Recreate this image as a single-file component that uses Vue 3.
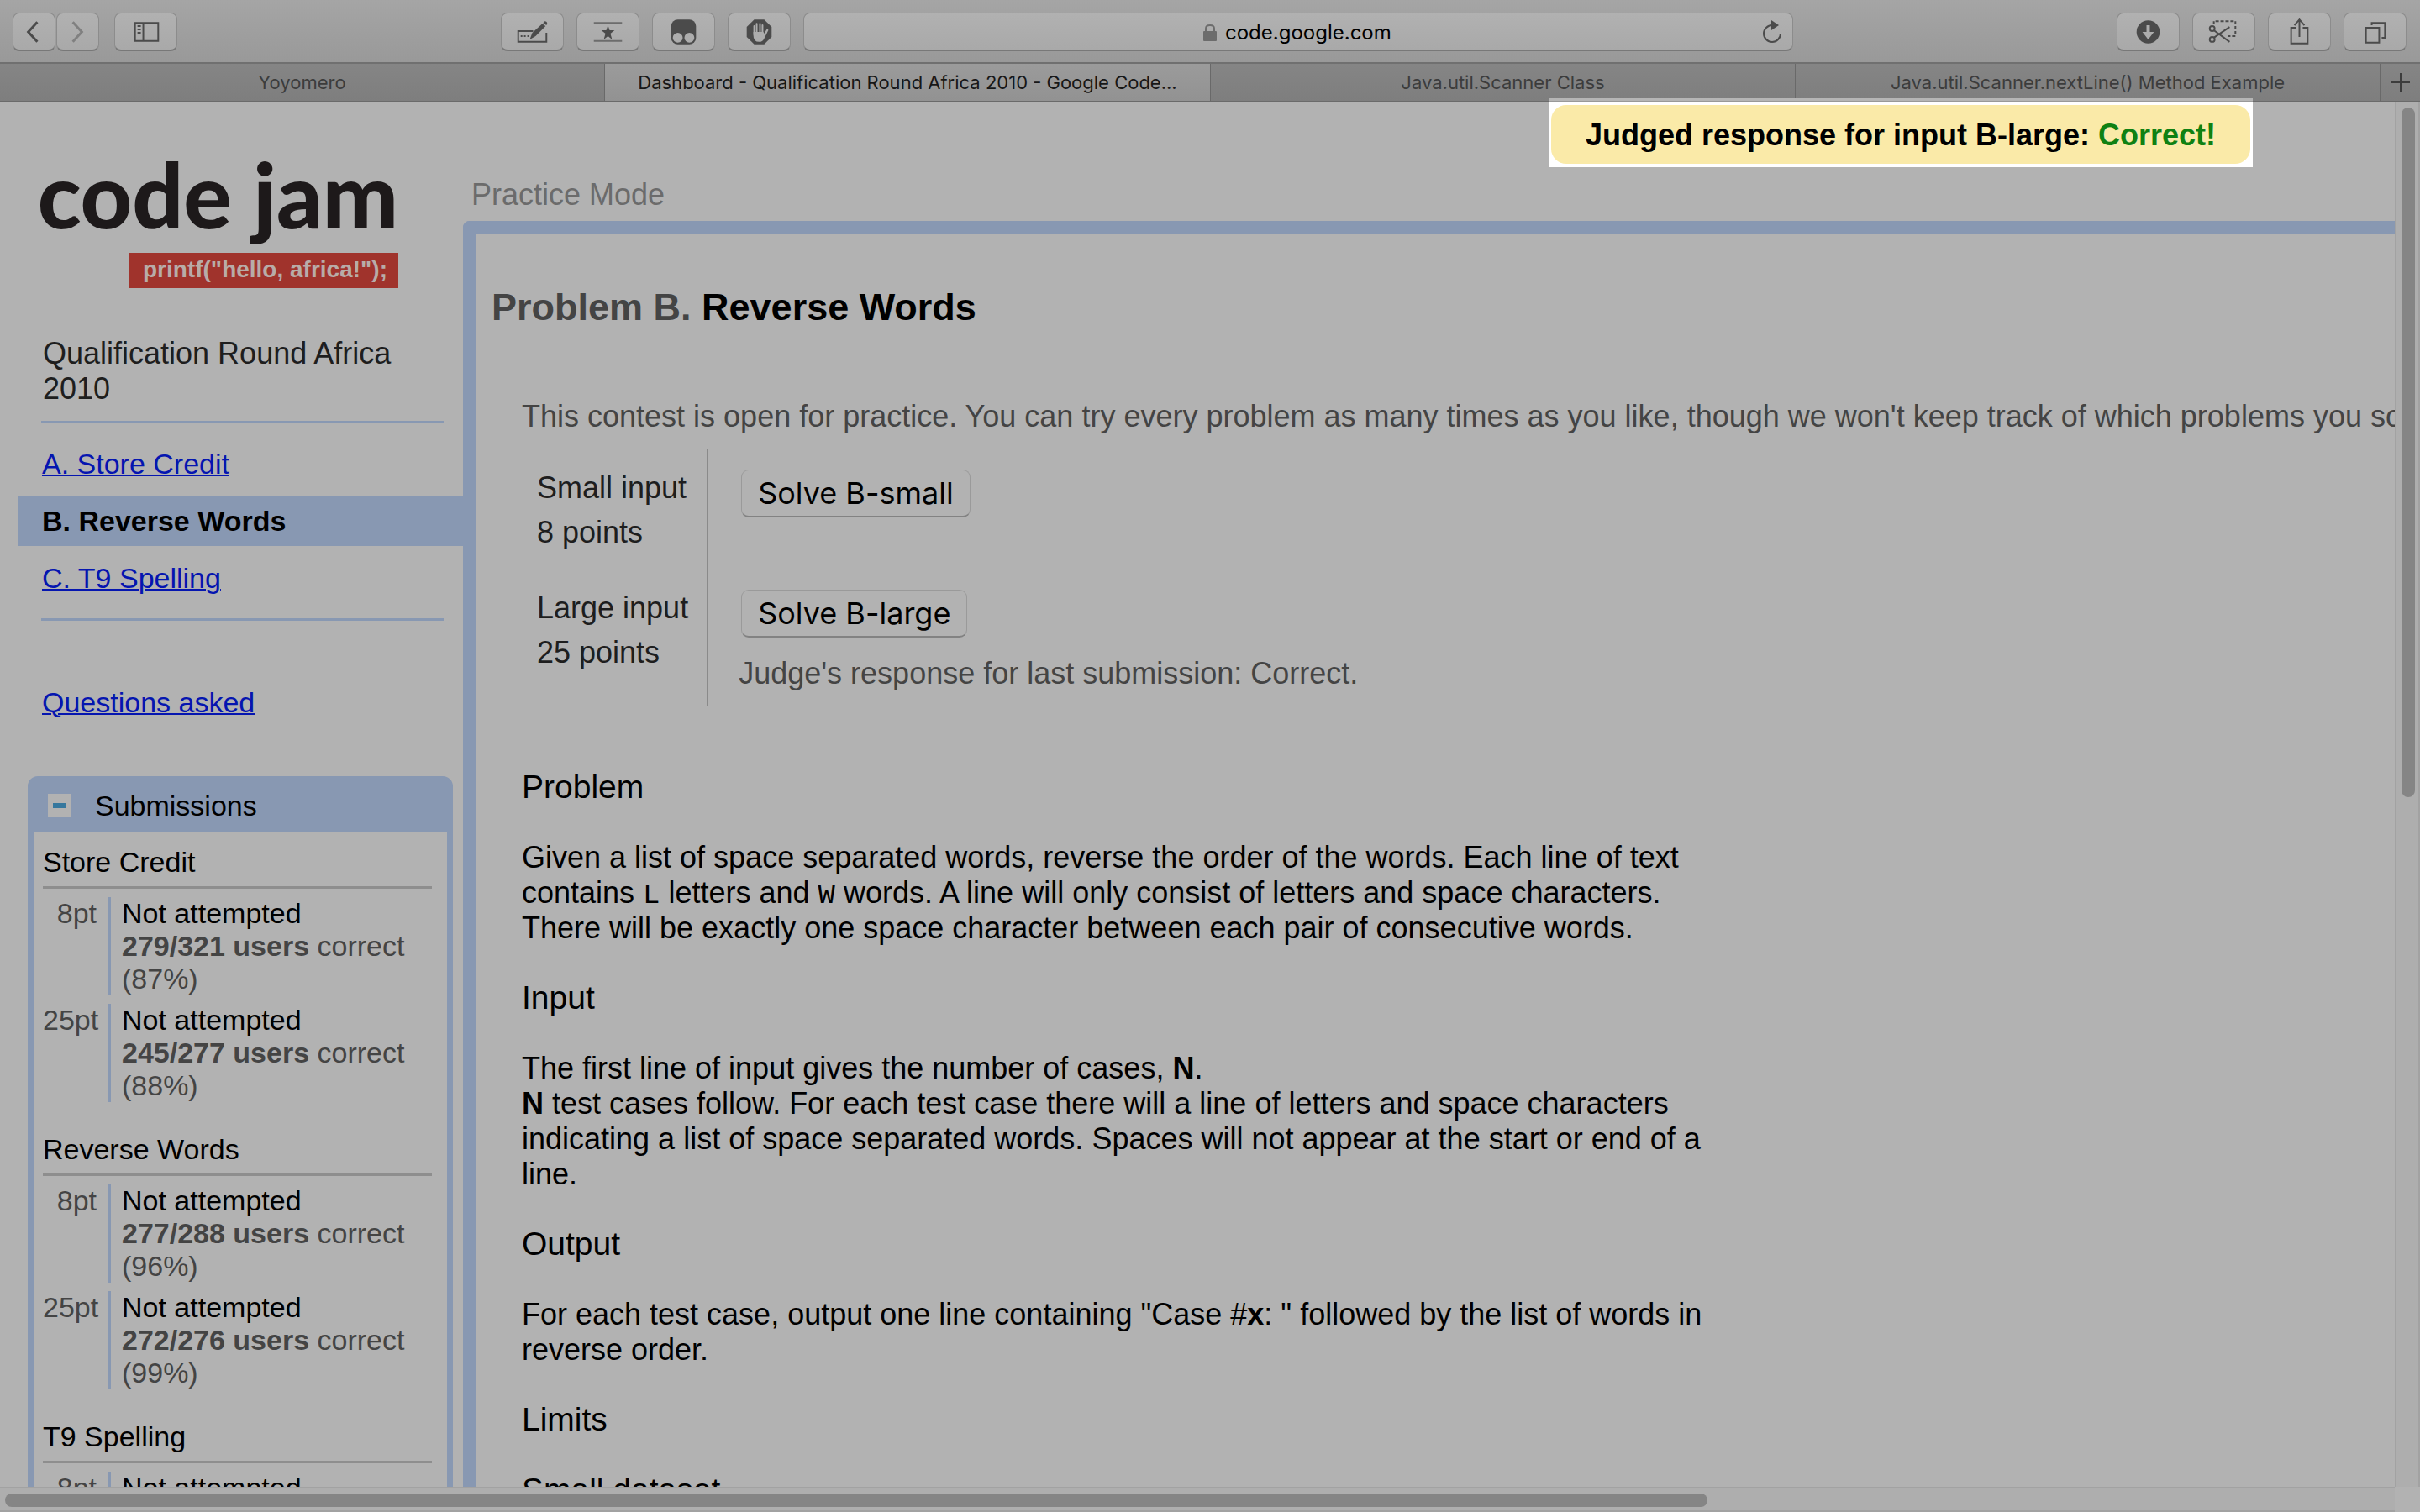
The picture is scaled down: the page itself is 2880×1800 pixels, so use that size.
<script setup>
import { ref } from 'vue'

const address = ref('code.google.com')

const tabs = [
  { title: 'Yoyomero', active: false },
  { title: 'Dashboard - Qualification Round Africa 2010 - Google Code...', active: true },
  { title: 'Java.util.Scanner Class', active: false },
  { title: 'Java.util.Scanner.nextLine() Method Example', active: false },
]

const problems = [
  { label: 'A. Store Credit', current: false },
  { label: 'B. Reverse Words', current: true },
  { label: 'C. T9 Spelling', current: false },
]

const submissions = [
  {
    name: 'Store Credit',
    rows: [
      { points: '8pt', users: '279/321 users', rate: '(87%)' },
      { points: '25pt', users: '245/277 users', rate: '(88%)' },
    ],
  },
  {
    name: 'Reverse Words',
    rows: [
      { points: '8pt', users: '277/288 users', rate: '(96%)' },
      { points: '25pt', users: '272/276 users', rate: '(99%)' },
    ],
  },
  {
    name: 'T9 Spelling',
    rows: [{ points: '8pt', users: '', rate: '' }],
  },
]
</script>

<template>
  <div class="window">
    <header class="toolbar">
      <div class="group nav">
        <div class="pair">
          <button class="tool half" aria-label="Back">
            <svg width="50" height="44" viewBox="0 0 50 44"><path d="M29 10 18 22 29 34" fill="none" stroke="#4b4b4b" stroke-width="3" /></svg>
          </button>
          <button class="tool half" aria-label="Forward">
            <svg width="50" height="44" viewBox="0 0 50 44"><path d="M19 10 30 22 19 34" fill="none" stroke="#808080" stroke-width="3" /></svg>
          </button>
        </div>
        <button class="tool" aria-label="Show sidebar">
          <svg width="74" height="44" viewBox="0 0 74 44">
            <path d="M24 11h28v22H24zM34 11v22" fill="none" stroke="#4b4b4b" stroke-width="2" />
            <path d="M27 14h4v2h-4zM27 18h4v2h-4zM27 22h4v2h-4z" fill="#4b4b4b" />
          </svg>
        </button>
      </div>

      <div class="group centre">
        <button class="tool" aria-label="Autofill">
          <svg width="74" height="44" viewBox="0 0 74 44">
            <path d="M38 21H20v13h34V23" fill="none" stroke="#4b4b4b" stroke-width="2" />
            <path d="M23 26h2v2h-2zM27 26h2v2h-2zM31 26h2v2h-2z" fill="#4b4b4b" />
            <path d="M34 31 37 23 49 12 53 15 41 27Z" fill="#4b4b4b" />
            <path d="M50 11 52 9Q55 9 55 12L54 14Z" fill="#4b4b4b" />
          </svg>
        </button>
        <button class="tool" aria-label="Top sites">
          <svg width="74" height="44" viewBox="0 0 74 44">
            <path d="M20 11h34M20 33h34" stroke="#6c6c6c" stroke-width="2" />
            <path d="m37 14 2 6h6l-5 4 2 7-5-4-5 4 2-7-5-4h6z" fill="#4b4b4b" />
          </svg>
        </button>
        <button class="tool" aria-label="Private extension">
          <svg width="74" height="44" viewBox="0 0 74 44">
            <rect x="22" y="7" width="30" height="30" rx="8" fill="#4b4b4b" />
            <circle cx="30" cy="29" r="6" fill="#adadad" />
            <circle cx="44" cy="29" r="6" fill="#adadad" />
          </svg>
        </button>
        <button class="tool" aria-label="Content blocker">
          <svg width="74" height="44" viewBox="0 0 74 44">
            <path d="M31 7h12l9 9v12l-9 9H31l-9-9V16z" fill="#4b4b4b" />
            <path d="M31 25V15M34 24V12M38 24V12M41 25V14" stroke="#adadad" stroke-width="2" stroke-linecap="round" />
            <path d="M30 22h12l1 2 3-5q2-1 2 1l-5 10q-2 4-6 4-7 0-7-8z" fill="#adadad" />
          </svg>
        </button>
        <div class="address">
          <label class="host">
            <svg width="16" height="22" viewBox="0 0 16 22" aria-hidden="true">
              <path d="M3 10V6Q3 2 8 2t5 4v4" fill="none" stroke="#6c6c6c" stroke-width="2" />
              <rect y="9" width="16" height="12" rx="1" fill="#6c6c6c" />
            </svg>
            <input v-model="address" type="text" aria-label="Address" />
          </label>
          <button class="reload" aria-label="Reload">
            <svg width="24" height="30" viewBox="0 0 24 30">
              <path d="M12 7A10 10 0 1 0 22 17" fill="none" stroke="#4b4b4b" stroke-width="2" />
              <path d="M11 1 20 7 11 13Z" fill="#4b4b4b" />
            </svg>
          </button>
        </div>
      </div>

      <div class="group">
        <button class="tool" aria-label="Downloads">
          <svg width="74" height="44" viewBox="0 0 74 44">
            <circle cx="37" cy="22" r="14" fill="#4b4b4b" />
            <path d="M35 14h4v8h5l-7 9-7-9h5z" fill="#adadad" />
          </svg>
        </button>
        <button class="tool" aria-label="Clip">
          <svg width="74" height="44" viewBox="0 0 74 44">
            <path d="M25 13V9H51V27H42" fill="none" stroke="#4b4b4b" stroke-width="2" stroke-dasharray="4 2" />
            <g fill="none" stroke="#4b4b4b" stroke-width="2">
              <path d="M25 20 44 34M25 29 44 16" />
              <circle cx="23" cy="18" r="3" />
              <circle cx="23" cy="31" r="3" />
            </g>
          </svg>
        </button>
        <button class="tool" aria-label="Share">
          <svg width="74" height="44" viewBox="0 0 74 44">
            <path d="M33 17h-6v19h20V17h-6M37 28V8M31 14l6-7 6 7" fill="none" stroke="#4b4b4b" stroke-width="2" />
          </svg>
        </button>
        <button class="tool" aria-label="Show all tabs">
          <svg width="74" height="44" viewBox="0 0 74 44">
            <path d="M26 17h16v18H26zM33 14v-3h16v18h-4" fill="none" stroke="#4b4b4b" stroke-width="2" />
          </svg>
        </button>
      </div>
    </header>

    <nav class="tabs">
      <button v-for="tab in tabs" :key="tab.title" class="tab" :class="{ active: tab.active }">{{ tab.title }}</button>
      <button class="tab add" aria-label="New tab">
        <svg width="24" height="24" viewBox="0 0 24 24"><path d="M12 1v22M1 12h22" stroke="#3c3c3c" stroke-width="2" /></svg>
      </button>
    </nav>

    <div class="viewport">
      <div class="page">
        <aside class="sidebar">
          <div class="logo">
            <span class="wordmark">code jam</span>
            <span class="slogan">printf("hello, africa!");</span>
          </div>
          <h2 class="round">Qualification Round Africa 2010</h2>
          <ul class="problems">
            <li v-for="problem in problems" :key="problem.label" :class="{ current: problem.current }">
              <b v-if="problem.current">{{ problem.label }}</b>
              <a v-else href="#">{{ problem.label }}</a>
            </li>
          </ul>
          <p class="questions"><a href="#">Questions asked</a></p>

          <section class="panel">
            <h3 class="panel-head">
              <button class="toggle" aria-label="Collapse submissions"></button>
              Submissions
            </h3>
            <div v-for="group in submissions" :key="group.name" class="entry">
              <h4>{{ group.name }}</h4>
              <div v-for="row in group.rows" :key="row.points" class="score">
                <span class="points">{{ row.points }}</span>
                <div class="status">
                  <p class="state">Not attempted</p>
                  <p v-if="row.users"><b>{{ row.users }}</b> correct</p>
                  <p v-if="row.rate">{{ row.rate }}</p>
                </div>
              </div>
            </div>
          </section>
        </aside>

        <main class="main">
          <p class="mode">Practice Mode</p>
          <article class="frame">
            <h1><span>Problem B.</span> Reverse Words</h1>
            <div class="body">
              <p class="notice">This contest is open for practice. You can try every problem as many times as you like, though we won't keep track of which problems you solve.</p>
              <table class="inputs">
                <tbody>
                  <tr>
                    <th scope="row">Small input<br />8 points</th>
                    <td><button class="solve">Solve B-small</button></td>
                  </tr>
                  <tr class="last">
                    <th scope="row">Large input<br />25 points</th>
                    <td>
                      <button class="solve">Solve B-large</button>
                      <p>Judge's response for last submission: Correct.</p>
                    </td>
                  </tr>
                </tbody>
              </table>
              <div class="statement">
                <h3>Problem</h3>
                <p>Given a list of space separated words, reverse the order of the words. Each line of text contains <code>L</code> letters and <code>W</code> words. A line will only consist of letters and space characters. There will be exactly one space character between each pair of consecutive words.</p>
                <h3>Input</h3>
                <p>The first line of input gives the number of cases, <b>N</b>.<br /><b>N</b> test cases follow. For each test case there will a line of letters and space characters indicating a list of space separated words. Spaces will not appear at the start or end of a line.</p>
                <h3>Output</h3>
                <p>For each test case, output one line containing "Case #<b>x</b>: " followed by the list of words in reverse order.</p>
                <h3>Limits</h3>
                <h3>Small dataset</h3>
              </div>
            </div>
          </article>
        </main>
      </div>
      <div class="scroll-y"><i></i></div>
      <div class="scroll-x"><i></i></div>
      <div class="corner"></div>
    </div>

    <div class="spotlight" role="status">
      <p>Judged response for input B-large: <span>Correct!</span></p>
    </div>
  </div>
</template>

<style>
body {
  margin: 0;
  background: #b2b2b2;
}
</style>

<style scoped>
.window {
  position: relative;
  display: flex;
  flex-direction: column;
  height: 100vh;
  overflow: hidden;
  background: #b2b2b2;
  color: #000;
  font: 36px/42px "Liberation Sans", Arial, sans-serif;
}
.window * {
  box-sizing: border-box;
}
h1, h2, h3, h4, p, ul {
  margin: 0;
  padding: 0;
  font-size: inherit;
  font-weight: normal;
}
button, input {
  margin: 0;
  padding: 0;
  border: 0;
  background: none;
  font: inherit;
  color: inherit;
}
svg {
  display: block;
}
a {
  color: #0515b0;
  text-decoration-thickness: 2px;
}

/* Browser toolbar */
.toolbar {
  flex: none;
  display: flex;
  justify-content: space-between;
  padding: 15px 16px 13px 15px;
  background: linear-gradient(#a5a5a5, #999);
}
.group {
  display: flex;
  gap: 15px;
}
.nav {
  gap: 18px;
}
.pair {
  display: flex;
  gap: 1px;
}
.centre {
  flex: 0 1 1538px;
}
.tool, .address {
  height: 46px;
  border: 1px solid #8c8c8c;
  border-bottom: 2px solid #787878;
  border-radius: 8px;
  background: linear-gradient(#b1b1b1, #a9a9a9);
}
.tool {
  flex: none;
  display: flex;
  justify-content: center;
  width: 75px;
}
.half {
  width: 51px;
}
.address {
  flex: 1;
  display: flex;
  align-items: center;
  padding-right: 12px;
}
.host {
  flex: 1;
  display: flex;
  justify-content: center;
  align-items: center;
  gap: 10px;
  padding: 2px 0 0 36px;
}
.host input {
  width: 200px;
  font: 24px/32px Inter, sans-serif;
}
.tabs {
  flex: none;
  display: grid;
  grid-template-columns: 720fr 721fr 696fr 696fr 47px;
  height: 48px;
  border-top: 2px solid #707070;
  border-bottom: 2px solid #6a6a6a;
}
.tab {
  overflow: hidden;
  border-right: 1px solid #696969;
  background: linear-gradient(#858585, #7e7e7e);
  color: #3c3c3c;
  font: 22px/28px Inter, sans-serif;
  white-space: nowrap;
}
.tab.active {
  background: linear-gradient(#9b9b9b, #929292);
  color: #171717;
}
.tab.add {
  display: flex;
  align-items: center;
  justify-content: center;
  border: 0;
}

/* Page and scrollbars */
.viewport {
  flex: 1;
  min-height: 0;
  display: grid;
  grid-template: minmax(0, 1fr) 30px / minmax(0, 1fr) 30px;
}
.page {
  display: flex;
  overflow: hidden;
}
.scroll-y {
  padding: 6px 4px 0 6px;
  border: solid #a2a2a2;
  border-width: 0 2px;
  background: #aeaeae;
}
.scroll-y i {
  display: block;
  width: 16px;
  height: 50%;
  border-radius: 8px;
  background: #858585;
}
.scroll-x {
  padding: 6px 0 0 6px;
  border: solid #a2a2a2;
  border-width: 2px 0;
  background: #aeaeae;
}
.scroll-x i {
  display: block;
  width: 71.25%;
  height: 16px;
  border-radius: 8px;
  background: #858585;
}

/* Sidebar */
.sidebar {
  flex: none;
  width: 551px;
  padding-top: 49px;
}
.logo {
  display: flex;
  flex-direction: column;
  align-items: flex-end;
  width: 476px;
  padding-right: 2px;
}
.wordmark {
  margin-bottom: 11px;
  color: #1d191a;
  font: 900 107px/119px Lato, sans-serif;
  white-space: nowrap;
}
.slogan {
  width: 320px;
  height: 42px;
  padding-left: 16px;
  background: #a0332c;
  color: #b8aca8;
  font: bold 28px/40px "Liberation Sans", Arial, sans-serif;
  white-space: nowrap;
}
.round {
  margin: 57px 23px 0 49px;
  padding: 0 0 17px 2px;
  border-bottom: 3px solid #8898b2;
  color: #1e1e1e;
}
.problems {
  display: flex;
  flex-direction: column;
  gap: 8px;
  position: relative;
  margin-bottom: 76px;
  padding: 18px 0 21px 22px;
  list-style: none;
  font-size: 34px;
  line-height: 60px;
}
.problems::after {
  content: "";
  position: absolute;
  right: 23px;
  bottom: 0;
  left: 49px;
  border-bottom: 3px solid #8898b2;
}
.problems li {
  padding-left: 28px;
}
.problems .current {
  background: #8898b2;
}
.questions {
  padding-left: 50px;
  font-size: 34px;
}
.panel {
  margin: 67px 12px 0 33px;
  border: 7px solid #8898b2;
  border-radius: 12px;
  font-size: 34px;
}
.panel-head {
  display: flex;
  align-items: center;
  gap: 28px;
  padding: 7px 17px 10px;
  background: #8898b2;
}
.toggle {
  width: 28px;
  height: 28px;
  border: solid #b2b2b2;
  border-width: 11px 6px;
  background: #36789e;
}
.entry {
  margin: 17px 18px 37px 11px;
  line-height: 39px;
}
.entry + .entry {
  margin-top: 0;
}
.entry h4 {
  margin-bottom: 10px;
  padding-bottom: 9px;
  border-bottom: 3px solid #8e8e8e;
}
.score {
  display: flex;
  gap: 14px;
  color: #444;
}
.score + .score {
  margin-top: 10px;
}
.points {
  width: 64px;
  text-align: right;
}
.status {
  flex: 1;
  min-height: 117px;
  padding-left: 13px;
  border-left: 3px solid #8898b2;
}
.state {
  color: #000;
}

/* Problem area */
.main {
  flex: 1;
  min-width: 0;
  padding-top: 89px;
}
.mode {
  padding: 0 0 10px 10px;
  color: #6b6b6b;
}
.frame {
  min-height: 100%;
  padding: 61px 0 0 18px;
  border: solid #8898b2;
  border-width: 16px 0 0 16px;
  border-top-left-radius: 8px;
}
h1 {
  margin-bottom: 83px;
  font: bold 45px/52px "Liberation Sans", Arial, sans-serif;
}
h1 span {
  color: #444;
}
.body {
  padding-left: 36px;
}
.notice {
  overflow: hidden;
  color: #444;
  white-space: nowrap;
}
.inputs {
  margin: 17px 0 75px;
  border-collapse: collapse;
}
.inputs tr {
  height: 143px;
}
.inputs .last {
  height: 164px;
}
.inputs th {
  padding: 20px 22px 0 18px;
  border-right: 2px solid #8a8a8a;
  color: #1e1e1e;
  font-weight: normal;
  line-height: 53px;
  text-align: left;
  vertical-align: top;
}
.inputs td {
  padding: 25px 0 0 36px;
  color: #444;
  vertical-align: top;
}
.solve {
  display: block;
  height: 57px;
  margin: 0 3px 22px;
  padding: 0 19px;
  border: 1px solid #9a9a9a;
  border-bottom: 2px solid #828282;
  border-radius: 9px;
  color: #000;
  font: 36px/50px Inter, sans-serif;
}
.statement {
  max-width: 1440px;
}
.statement h3 {
  margin-bottom: 42px;
  font-size: 39px;
}
.statement p {
  margin-bottom: 41px;
}
.statement code {
  font: 34px/20px "Liberation Mono", monospace;
}

/* Highlighted verdict above the dimmed page */
.spotlight {
  position: absolute;
  top: 117px;
  right: 199px;
  padding: 8px 3px 4px 2px;
  background: linear-gradient(#b5b5b5 3px, #999 3px 5px, #fff 5px);
}
.spotlight p {
  padding: 15px 41px 13px;
  border-radius: 18px;
  background: #faeaa8;
  font-weight: bold;
  white-space: nowrap;
}
.spotlight span {
  color: #0f8113;
}
</style>
